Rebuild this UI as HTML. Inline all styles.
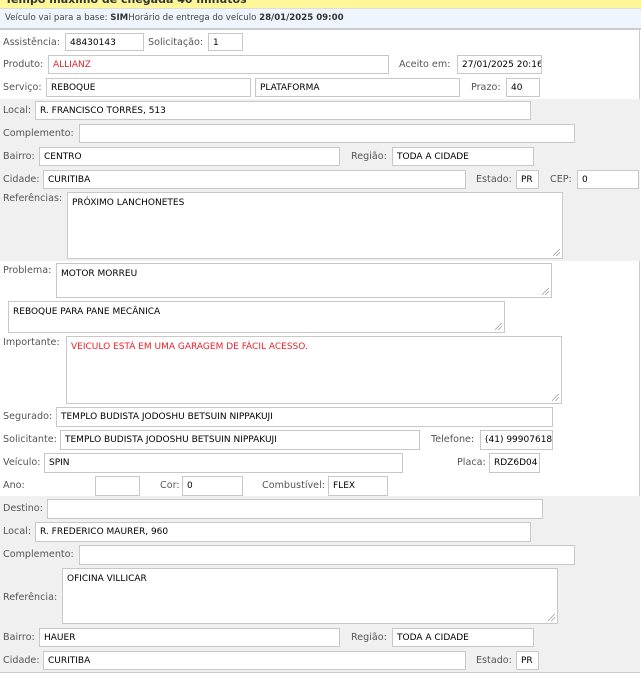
<!DOCTYPE html>
<html><head><meta charset="utf-8"><style>
body{margin:0;width:641px;height:695px;position:relative;background:#fff;font-family:"DejaVu Sans","Liberation Sans",sans-serif;overflow:hidden}
.l{position:absolute;font-size:9.6px;color:#555;white-space:nowrap;line-height:12px}
.i{position:absolute;box-sizing:border-box;border:1px solid #c8c8c8;background:#fff;font-size:9px;color:#000;padding:3px 0 0 4px;white-space:nowrap;overflow:hidden;line-height:12px}
.t{padding-top:4px}
.t:after{content:"";position:absolute;right:2px;bottom:2px;width:7px;height:7px;background:linear-gradient(135deg,transparent 45%,#999 45%,#999 52%,transparent 52%,transparent 70%,#999 70%,#999 77%,transparent 77%)}
.g{position:absolute;left:0;width:640px;background:#f0f0f0}
</style></head><body>
<div style="position:absolute;left:0;top:0;width:641px;height:8px;background:#fff79a;overflow:hidden"><div style="position:absolute;left:5px;top:-7px;font-size:11px;font-weight:bold;color:#333">Tempo máximo de chegada 40 minutos</div></div>
<div style="position:absolute;left:0;top:8px;width:641px;height:20px;background:#eef5fd;border-top:1px solid #ddd"></div>
<div class="l" style="left:5px;top:12px;font-size:8.6px;color:#444">Veículo vai para a base: <b style="color:#333">SIM</b>Horário de entrega do veículo <b style="color:#333">28/01/2025 09:00</b></div>
<div style="position:absolute;left:0;top:28px;width:641px;height:2px;background:#ccc"></div>
<div style="position:absolute;left:639px;top:28px;width:1px;height:645px;background:#ccc"></div>
<div class="g" style="top:99px;height:162px"></div>
<div class="g" style="top:496px;height:176px;border-bottom:1px solid #ccc"></div>

<div class="l" style="left:3px;top:37px">Assistência:</div><div class="i" style="left:65px;top:33px;width:79px;height:18px">48430143</div>
<div class="l" style="left:148px;top:37px">Solicitação:</div><div class="i" style="left:208px;top:33px;width:35px;height:18px">1</div>
<div class="l" style="left:3px;top:59px">Produto:</div><div class="i" style="left:48px;top:55px;width:341px;height:19px;color:#e8202a">ALLIANZ</div>
<div class="l" style="left:399px;top:59px">Aceito em:</div><div class="i" style="left:457px;top:55px;width:85px;height:19px">27/01/2025 20:16</div>
<div class="l" style="left:3px;top:82px">Serviço:</div><div class="i" style="left:46px;top:78px;width:205px;height:19px">REBOQUE</div>
<div class="i" style="left:255px;top:78px;width:205px;height:19px">PLATAFORMA</div>
<div class="l" style="left:471px;top:82px">Prazo:</div><div class="i" style="left:506px;top:78px;width:34px;height:19px">40</div>

<div class="l" style="left:3px;top:105px">Local:</div><div class="i" style="left:35px;top:101px;width:496px;height:19px">R. FRANCISCO TORRES, 513</div>
<div class="l" style="left:3px;top:128px">Complemento:</div><div class="i" style="left:79px;top:124px;width:496px;height:19px"></div>
<div class="l" style="left:3px;top:151px">Bairro:</div><div class="i" style="left:39px;top:147px;width:301px;height:19px">CENTRO</div>
<div class="l" style="left:351px;top:151px">Região:</div><div class="i" style="left:392px;top:147px;width:142px;height:19px">TODA A CIDADE</div>
<div class="l" style="left:3px;top:174px">Cidade:</div><div class="i" style="left:43px;top:170px;width:423px;height:19px">CURITIBA</div>
<div class="l" style="left:476px;top:174px">Estado:</div><div class="i" style="left:516px;top:170px;width:23px;height:19px">PR</div>
<div class="l" style="left:550px;top:174px">CEP:</div><div class="i" style="left:577px;top:170px;width:62px;height:19px">0</div>
<div class="l" style="left:3px;top:193px">Referências:</div><div class="i t" style="left:67px;top:192px;width:496px;height:67px">PRÓXIMO LANCHONETES</div>

<div class="l" style="left:3px;top:265px">Problema:</div><div class="i t" style="left:56px;top:263px;width:496px;height:35px">MOTOR MORREU</div>
<div class="i t" style="left:8px;top:301px;width:497px;height:32px">REBOQUE PARA PANE MECÂNICA</div>
<div class="l" style="left:3px;top:337px">Importante:</div><div class="i t" style="left:66px;top:336px;width:496px;height:68px;color:#e8202a">VEICULO ESTÁ EM UMA GARAGEM DE FÁCIL ACESSO.</div>
<div class="l" style="left:3px;top:411px">Segurado:</div><div class="i" style="left:56px;top:407px;width:497px;height:20px">TEMPLO BUDISTA JODOSHU BETSUIN NIPPAKUJI</div>
<div class="l" style="left:3px;top:434px">Solicitante:</div><div class="i" style="left:60px;top:430px;width:360px;height:20px">TEMPLO BUDISTA JODOSHU BETSUIN NIPPAKUJI</div>
<div class="l" style="left:431px;top:434px">Telefone:</div><div class="i" style="left:480px;top:430px;width:73px;height:20px">(41) 999076186</div>
<div class="l" style="left:3px;top:457px">Veículo:</div><div class="i" style="left:44px;top:453px;width:359px;height:20px">SPIN</div>
<div class="l" style="left:457px;top:457px">Placa:</div><div class="i" style="left:489px;top:453px;width:51px;height:20px">RDZ6D04</div>
<div class="l" style="left:3px;top:480px">Ano:</div><div class="i" style="left:95px;top:476px;width:45px;height:20px"></div>
<div class="l" style="left:160px;top:480px">Cor:</div><div class="i" style="left:182px;top:476px;width:61px;height:20px">0</div>
<div class="l" style="left:262px;top:480px">Combustível:</div><div class="i" style="left:328px;top:476px;width:60px;height:20px">FLEX</div>

<div class="l" style="left:3px;top:503px">Destino:</div><div class="i" style="left:47px;top:499px;width:496px;height:20px"></div>
<div class="l" style="left:3px;top:526px">Local:</div><div class="i" style="left:35px;top:522px;width:496px;height:20px">R. FREDERICO MAURER, 960</div>
<div class="l" style="left:3px;top:549px">Complemento:</div><div class="i" style="left:79px;top:545px;width:496px;height:20px"></div>
<div class="l" style="left:3px;top:592px">Referência:</div><div class="i t" style="left:62px;top:568px;width:496px;height:56px">OFICINA VILLICAR</div>
<div class="l" style="left:3px;top:632px">Bairro:</div><div class="i" style="left:39px;top:628px;width:301px;height:19px">HAUER</div>
<div class="l" style="left:351px;top:632px">Região:</div><div class="i" style="left:392px;top:628px;width:142px;height:19px">TODA A CIDADE</div>
<div class="l" style="left:3px;top:655px">Cidade:</div><div class="i" style="left:43px;top:651px;width:423px;height:19px">CURITIBA</div>
<div class="l" style="left:476px;top:655px">Estado:</div><div class="i" style="left:516px;top:651px;width:23px;height:19px">PR</div>
</body></html>
